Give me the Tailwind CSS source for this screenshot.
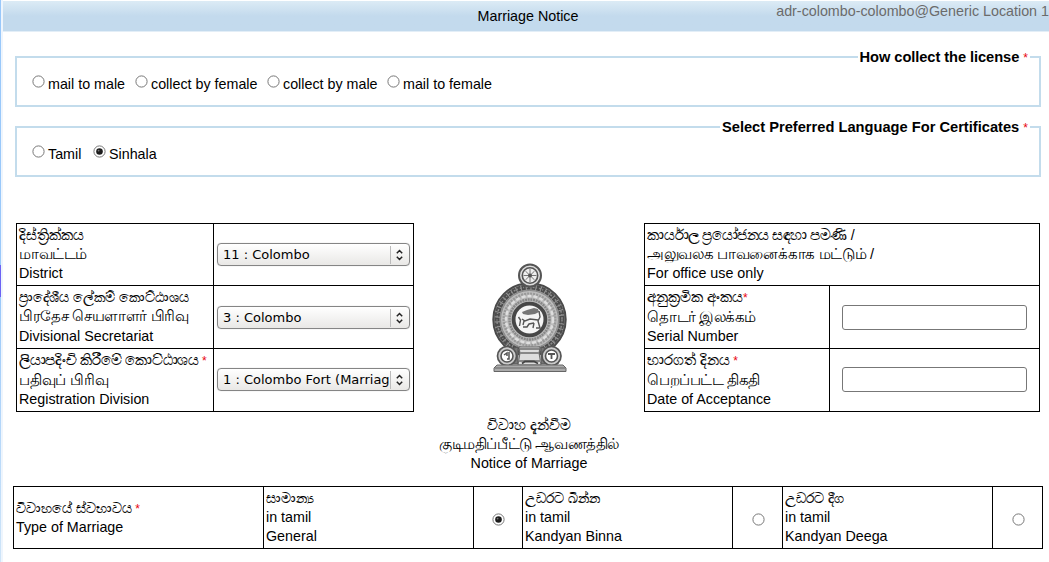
<!DOCTYPE html>
<html lang="en">
<head>
<meta charset="utf-8">
<title>Marriage Notice</title>
<script src="https://cdn.jsdelivr.net/npm/@tailwindcss/browser@4"></script>
</head>
<body class="bg-white">
<svg class="hidden">
  <symbol id="radio" viewBox="0 0 13 13"><circle cx="6.5" cy="6.5" r="5.6" fill="#fff" stroke="#777"/></symbol>
  <symbol id="radio-on" viewBox="0 0 13 13"><circle cx="6.5" cy="6.5" r="5.6" fill="#fff" stroke="#777"/><circle cx="6.5" cy="6.5" r="3.3" fill="#1c1c1c"/><circle cx="5.6" cy="5.6" r=".9" fill="#777"/></symbol>
  <symbol id="arrows" viewBox="0 0 9 12"><path d="M1.8 4.2 4.5 1.500l2.700 2.700M1.800 7.800l2.700 2.700 2.700-2.700" fill="none" stroke="#222" stroke-width="1.5"/></symbol>
</svg>
<div class="flex w-[1049px] h-[562px] overflow-hidden font-['Liberation_Sans','Noto_Sans',sans-serif] text-[14.3px] leading-[19px] text-black whitespace-nowrap">
  <div class="w-[3px] shrink-0 flex">
    <div class="w-px flex flex-col"><div class="h-[265px] bg-[#99c8fa]"></div><div class="h-8 bg-[#6c62f4]"></div><div class="grow bg-linear-to-b from-[#99c8fa] to-[#cfe5f8]"></div></div>
    <div class="w-0.5 bg-[#eef5fd]"></div>
  </div>
  <div class="w-[1046px] flex flex-col">
    <header class="mt-px h-[31px] border-b border-[#e3eef7] bg-linear-to-b from-[#dcebf5] to-[#c3daed] to-50% grid grid-cols-[1fr_auto_1fr]">
      <div></div>
      <div class="pt-[6px] pl-[4px] text-center">Marriage Notice</div>
      <div class="flex justify-end pt-px text-[#6b6b6b]">adr-colombo-colombo@Generic Location 1</div>
    </header>

    <fieldset class="mt-[15px] ml-3 w-[1026px] h-[60px] border-2 border-[#c3dcec]">
      <legend class="ml-auto mr-[9px] px-[2px] font-bold text-[14.67px]"><div class="pt-px -mb-px"><span class="tracking-[-0.07px]">How collect the license</span> <span class="text-red-600 font-normal text-[12px]">*</span></div></legend>
      <div class="flex pl-[14.5px] pt-[8px]">
        <label class="flex w-[103px] gap-[3.5px]"><svg class="size-[13px] mt-[0.2px]"><use href="#radio"/></svg>mail to male</label>
        <label class="flex w-[132px] gap-[3.5px]"><svg class="size-[13px] mt-[0.2px]"><use href="#radio"/></svg>collect by female</label>
        <label class="flex w-[120px] gap-[3.5px]"><svg class="size-[13px] mt-[0.2px]"><use href="#radio"/></svg>collect by male</label>
        <label class="flex gap-[3.5px]"><svg class="size-[13px] mt-[0.2px]"><use href="#radio"/></svg>mail to female</label>
      </div>
    </fieldset>
    <fieldset class="mt-[10px] ml-3 w-[1026px] h-[60px] border-2 border-[#c3dcec]">
      <legend class="ml-auto mr-[9px] px-[2px] font-bold text-[14.67px]"><div class="pt-px -mb-px">Select Preferred Language For Certificates <span class="text-red-600 font-normal text-[12px]">*</span></div></legend>
      <div class="flex pl-[14.5px] pt-[8px]">
        <label class="flex w-[61px] gap-[3.5px]"><svg class="size-[13px] mt-[0.2px]"><use href="#radio"/></svg>Tamil</label>
        <label class="flex gap-[3.5px]"><svg class="size-[13px] mt-[0.2px]"><use href="#radio-on"/></svg>Sinhala</label>
      </div>
    </fieldset>

    <div class="flex mt-[46px] ml-[13px]">
      <div class="w-[398px] h-[189px] border border-black grid grid-cols-[197px_199px] grid-rows-[62px_63px_62px]">
        <div class="border-r border-b border-black pl-[2px] pt-[2px]"><div class="[-webkit-text-stroke:0.2px_black] text-[14.6px]">දිස්ත්‍රික්කය</div><div class="text-[14.67px] tracking-[-0.5px]">மாவட்டம்</div><div>District</div></div>
        <div class="border-b border-black pl-[3px] pt-[19px]"><div class="w-[193px] h-[23px] rounded-[4px] border border-[#858585] bg-linear-to-b from-white to-[#e9e8e6] flex items-center font-['DejaVu_Sans',sans-serif] text-[13px] shadow-[0_0_1px_#bbb]"><span class="w-[173px] pl-[5px] overflow-hidden border-r border-[#bbb] h-[18px] leading-[17px]">11 : Colombo</span><svg class="w-[9px] h-3 ml-[4px]"><use href="#arrows"/></svg></div></div>
        <div class="border-r border-b border-black pl-[2px] pt-[2px]"><div class="[-webkit-text-stroke:0.2px_black] text-[14px]">ප්‍රාදේශීය ලේකම් කොට්ඨාශය</div><div class="text-[14.67px] tracking-[-0.4px]">பிரதேச செயளாளர் பிரிவு</div><div class="pt-px">Divisional Secretariat</div></div>
        <div class="border-b border-black pl-[3px] pt-[20px]"><div class="w-[193px] h-[23px] rounded-[4px] border border-[#858585] bg-linear-to-b from-white to-[#e9e8e6] flex items-center font-['DejaVu_Sans',sans-serif] text-[13px] shadow-[0_0_1px_#bbb]"><span class="w-[173px] pl-[5px] overflow-hidden border-r border-[#bbb] h-[18px] leading-[17px]">3 : Colombo</span><svg class="w-[9px] h-3 ml-[4px]"><use href="#arrows"/></svg></div></div>
        <div class="border-r border-black pl-[2px] pt-[2px]"><div><span class="[-webkit-text-stroke:0.2px_black] text-[14.67px] tracking-[-0.3px]">ලියාපදිංචි කිරීමේ කොට්ඨාශය</span><span class="text-red-600 text-[12px]"> *</span></div><div class="text-[14.67px] tracking-[-0.2px]">பதிவுப் பிரிவு</div><div>Registration Division</div></div>
        <div class="pl-[3px] pt-[19px]"><div class="w-[193px] h-[23px] rounded-[4px] border border-[#858585] bg-linear-to-b from-white to-[#e9e8e6] flex items-center font-['DejaVu_Sans',sans-serif] text-[13px] shadow-[0_0_1px_#bbb]"><span class="w-[173px] pl-[5px] border-r border-[#bbb] h-[18px] leading-[17px]">1 : Colombo Fort (Marriag</span><svg class="w-[9px] h-3 ml-[4px]"><use href="#arrows"/></svg></div></div>
      </div>

      <div class="w-[230px] flex flex-col items-center pt-[35px] h-[263px]">
        <svg class="w-[90px] h-[118px]" viewBox="0 0 90 118" fill="none">
          <circle cx="45.5" cy="61.5" r="36.2" fill="#999" stroke="#4a4a4a" stroke-width="2"/>
          <circle cx="45.5" cy="61.5" r="32.500" stroke="#4c4c4c" stroke-width="5" stroke-dasharray="4 1"/>
          <circle cx="45.5" cy="61.5" r="32.500" stroke="#8c8c8c" stroke-width="1.500" stroke-dasharray="2 1.500 1 2"/>
          <circle cx="45.5" cy="61.5" r="29" fill="#bcbcbc" stroke="#888"/>
          <circle cx="45.5" cy="61.5" r="25.500" stroke="#999" stroke-width="3" stroke-dasharray="2 1"/>
          <circle cx="45.5" cy="61.5" r="23.500" stroke="#dedede" stroke-width="2.500" stroke-dasharray="4 2"/>
          <circle cx="45.5" cy="61.5" r="20" stroke="#888" stroke-width="2.500" stroke-dasharray="2 .7"/>
          <circle cx="45.5" cy="61.5" r="15.9" fill="#f5f5f5" stroke="#474747" stroke-width="3.8"/>
          <path d="M38 54l5-2 7-2 4 1 1 3-4 2-7 1-5-1z" fill="#777"/>
          <path d="M34.500 59l2 3-1 6M38 61l3 2 5-2 8 1M55 53l1 6-2 4 2 7h-4M50 65l-5 1-2 3h-4M40 63l-1 4M50 65l-1 5" stroke="#555" stroke-width="1.400"/>
          <circle cx="46" cy="17.5" r="11" fill="#ddd" stroke="#555" stroke-width="2"/>
          <circle cx="46" cy="17.5" r="7.7" fill="#eee" stroke="#555" stroke-width="1.6"/>
          <path d="M46 11v13M39.5 17.5h13M41.4 13l9.200 9M50.600 13l-9.200 9" stroke="#777"/>
          <circle cx="46" cy="17.5" r="2" fill="#555"/>
          <path d="M24 92l10-3v17H17V95zM67 92l-10-3v17h17V95z" fill="#777" stroke="#555"/>
          <path d="M35 89h21l-1 6 2 12H34l2-12z" fill="#ddd" stroke="#666"/>
          <path d="M36 91h19M36 95h19M35 103h22" stroke="#888" stroke-width="1.800"/>
          <path d="M38 105.500l3-2h9l4 2" stroke="#444" stroke-width="1.800"/>
          <g stroke="#555">
            <circle cx="23" cy="98" r="9.5" fill="#ccc" stroke-width="1.700"/><circle cx="23" cy="98" r="6" fill="#fff" stroke-width="1.600"/><path d="M20 97l3-2v3M25 94v7h-2" stroke-width="1.500"/>
            <circle cx="67.5" cy="98" r="9.5" fill="#ccc" stroke-width="1.700"/><circle cx="67.5" cy="98" r="6" fill="#fff" stroke-width="1.600"/><path d="M64 96h7M67.500 96v5" stroke-width="1.800"/>
          </g>
          <path d="M13 107h66l3 3v3.500H10V110z" fill="#aaa" stroke="#666"/>
          <path d="M11 110h70" stroke="#666" stroke-width="1.200"/>
        </svg>
        <div class="mt-[40px] text-center"><div class="[-webkit-text-stroke:0.2px_black] text-[14.6px]">විවාහ දැන්වීම</div><div class="text-[14.67px] tracking-[-0.4px]">குடிமதிப்பீட்டு ஆவணத்தில்</div><div>Notice of Marriage</div></div>
      </div>

      <div class="w-[396px] h-[189px] border border-black grid grid-cols-[185px_209px] grid-rows-[62px_63px_62px]">
        <div class="col-span-2 border-b border-black pl-[2px] pt-[2px]"><div><span class="[-webkit-text-stroke:0.2px_black] text-[14.67px] tracking-[-0.5px]">කාර්යාල ප්‍රයෝජනය සඳහා පමණි</span> /</div><div class="text-[14.67px] tracking-[-0.35px]">அலுவலக பாவனைக்காக மட்டும் /</div><div>For office use only</div></div>
        <div class="border-r border-b border-black pl-[2px] pt-[2px]"><div><span class="[-webkit-text-stroke:0.2px_black] text-[14.5px]">අනුක්‍රමික අංකය</span><span class="text-red-600 text-[12px]">*</span></div><div class="text-[14.67px] tracking-[-0.5px]">தொடர் இலக்கம்</div><div>Serial Number</div></div>
        <div class="border-b border-black pl-3 pt-[19px]"><div class="w-[185px] h-[25px] rounded-[3px] border border-[#777]"></div></div>
        <div class="border-r border-black pl-[2px] pt-[2px]"><div><span class="[-webkit-text-stroke:0.2px_black] text-[14.5px]">භාරගත් දිනය</span><span class="text-red-600 text-[12px]"> *</span></div><div class="text-[14.67px] tracking-[-0.4px]">பெறப்பட்ட திகதி</div><div>Date of Acceptance</div></div>
        <div class="pl-3 pt-[18px]"><div class="w-[185px] h-[25px] rounded-[3px] border border-[#777]"></div></div>
      </div>
    </div>

    <div class="ml-[10px] w-[1030px] h-[63px] border border-black grid grid-cols-[250px_210px_49px_210px_50px_210px_49px]">
      <div class="border-r border-black pl-[2px] pt-[12px]"><div><span class="[-webkit-text-stroke:0.2px_black] text-[13.7px]">විවාහයේ ස්වභාවය</span><span class="text-red-600 text-[12px]"> *</span></div><div class="-mt-px">Type of Marriage</div></div>
      <div class="border-r border-black pl-[2px] pt-[2px]"><div class="[-webkit-text-stroke:0.2px_black] text-[14.3px]">සාමාන්‍ය</div><div>in tamil</div><div>General</div></div>
      <div class="border-r border-black flex justify-center pt-[25.5px] pl-[1px]"><svg class="size-[13px]"><use href="#radio-on"/></svg></div>
      <div class="border-r border-black pl-[2px] pt-[2px]"><div class="[-webkit-text-stroke:0.2px_black] text-[13.7px]">උඩරට බින්න</div><div>in tamil</div><div>Kandyan Binna</div></div>
      <div class="border-r border-black flex justify-center pt-[25.5px] pl-[2px]"><svg class="size-[13px]"><use href="#radio"/></svg></div>
      <div class="border-r border-black pl-[2px] pt-[2px]"><div class="[-webkit-text-stroke:0.2px_black] text-[14.3px]">උඩරට දීග</div><div>in tamil</div><div>Kandyan Deega</div></div>
      <div class="flex justify-center pt-[25.5px] pl-[2px]"><svg class="size-[13px]"><use href="#radio"/></svg></div>
    </div>
  </div>
</div>
</body>
</html>
